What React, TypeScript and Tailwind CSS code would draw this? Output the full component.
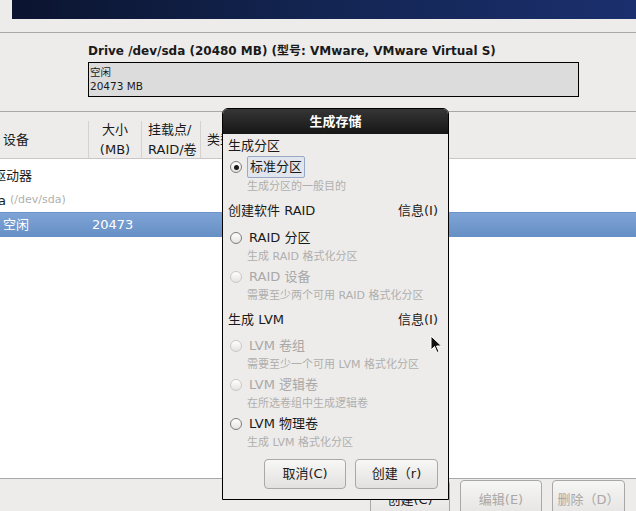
import React from "react";

const font = { fontFamily: '"DejaVu Sans", "Noto Sans CJK SC", sans-serif' };

function Radio({ checked = false, disabled = false }: { checked?: boolean; disabled?: boolean }) {
  return (
    <span
      className={`flex items-center justify-center w-[12px] h-[12px] rounded-full border bg-gradient-to-b from-white to-[#e4e3e1] ${
        disabled ? "border-[#c9c8c6]" : "border-[#7d7d7d]"
      }`}
    >
      {checked && <span className="w-[5px] h-[5px] rounded-full bg-[#1a1a1a]" />}
    </span>
  );
}

function Option({
  label,
  desc,
  checked,
  disabled,
  focus,
}: {
  label: string;
  desc: string;
  checked?: boolean;
  disabled?: boolean;
  focus?: boolean;
}) {
  return (
    <div>
      <div className={`flex items-center ${focus ? "h-[22px]" : "h-[20px]"}`}>
        <div className="w-[21px] pl-[2px] flex">
          <Radio checked={checked} disabled={disabled} />
        </div>
        {focus ? (
          <span className="h-[22px] flex items-center px-[2px] -ml-[2px] border border-[#9aaac4] bg-[#e1e6ee] rounded-[2px] text-[13px] text-[#1a1a1a]">
            {label}
          </span>
        ) : (
          <span className={`text-[13px] ${disabled ? "text-[#a9a8a6]" : "text-[#1a1a1a]"}`}>{label}</span>
        )}
      </div>
      <div className="h-[19px] flex items-center pl-[19px] text-[11px] text-[#b0afad]">{desc}</div>
    </div>
  );
}

function Section({ title, info }: { title: string; info?: boolean }) {
  return (
    <div className="h-[20px] flex items-center justify-between pr-[10px] text-[13px] text-[#1a1a1a]">
      <span>{title}</span>
      {info && <span>信息(I)</span>}
    </div>
  );
}

function BarButton({ label, className }: { label: string; className: string }) {
  return (
    <div
      className={`h-[40px] flex items-center justify-center rounded-[4px] border border-[#a9a8a6] bg-gradient-to-b from-[#f6f6f5] to-[#e3e2e0] text-[13px] ${className}`}
    >
      {label}
    </div>
  );
}

export default function App() {
  return (
    <div className="relative w-[636px] h-[511px] overflow-hidden bg-[#edeceb] text-[#1a1a1a]" style={font}>
      {/* banner */}
      <div className="ml-[12px] h-[19px] bg-gradient-to-r from-[#0b1430] via-[#132552] to-[#1b2f6e]" />
      <div className="h-[14px] border-b border-[#a9a8a6]" />

      {/* drive */}
      <div className="pl-[88px] pt-[10px]">
        <div className="h-[16px] flex items-center text-[12px] font-bold leading-none">
          Drive /dev/sda (20480 MB) (型号: VMware, VMware Virtual S)
        </div>
        <div className="mt-[3px] w-[491px] h-[35px] border border-black bg-[#dcdcdc] pl-[1px] pt-[2px] text-[10.5px] leading-[14px]">
          <div>空闲</div>
          <div>20473 MB</div>
        </div>
      </div>

      {/* table */}
      <div className="mt-[14px] border-t border-[#a9a8a6] bg-white h-[367px] flex flex-col">
        <div className="h-[47px] bg-[#edeceb] border-b border-[#c8c7c5] flex text-[13px]">
          <div className="w-[88px] flex items-center pl-[3px] pt-[9px]">设备</div>
          <div className="w-[53px] flex flex-col items-center justify-center leading-[20px] border-l border-[#d4d3d1] mt-[9px]">
            <span>大小</span>
            <span>(MB)</span>
          </div>
          <div className="w-[59px] flex flex-col justify-center pl-[6px] leading-[20px] border-l border-[#d4d3d1] mt-[9px]">
            <span>挂载点/</span>
            <span>RAID/卷</span>
          </div>
          <div className="flex items-center pl-[6px] border-l border-[#d4d3d1] mt-[9px]">类型</div>
        </div>
        <div className="h-[30px] flex items-center text-[13px] pt-[4px]">
          <span className="-ml-[7px]">驱动器</span>
        </div>
        <div className="h-[23px] flex items-center text-[13px] whitespace-nowrap">
          <span className="-ml-[17px]">sda</span>
          <span className="ml-[4px] text-[11px] text-[#b0afad]">(/dev/sda)</span>
        </div>
        <div className="h-[25px] flex items-center text-[13px] text-white bg-gradient-to-b from-[#7fa3d6] to-[#6590c5] border-t border-[#6d93c8]">
          <span className="w-[92px] pl-[3px]">空闲</span>
          <span>20473</span>
        </div>
      </div>

      {/* bottom bar */}
      <div className="border-t border-[#a9a8a6] h-[40px] flex pt-[1px] pl-[370px] gap-[10px]">
        <BarButton label="创建(C)" className="w-[80px] text-[#1a1a1a]" />
        <BarButton label="编辑(E)" className="w-[82px] text-[#a9a8a6]" />
        <BarButton label="删除（D）" className="w-[73px] text-[#a9a8a6]" />
      </div>

      {/* dialog */}
      <div className="absolute left-[222px] top-[108px] w-[227px] h-[392px] border border-black bg-[#edeceb] rounded-t-[6px] flex flex-col">
        <div className="h-[25px] rounded-t-[5px] bg-gradient-to-b from-[#363636] to-[#171717] flex items-center justify-center text-white text-[13px] font-bold">
          生成存储
        </div>
        <div className="pl-[5px] pt-[2px]">
          <Section title="生成分区" />
          <Option label="标准分区" desc="生成分区的一般目的" checked focus />
          <div className="mt-[4px] mb-[7px]">
            <Section title="创建软件 RAID" info />
          </div>
          <Option label="RAID 分区" desc="生成 RAID 格式化分区" />
          <Option label="RAID 设备" desc="需要至少两个可用 RAID 格式化分区" disabled />
          <div className="mt-[4px] mb-[6px]">
            <Section title="生成 LVM" info />
          </div>
          <Option label="LVM 卷组" desc="需要至少一个可用 LVM 格式化分区" disabled />
          <Option label="LVM 逻辑卷" desc="在所选卷组中生成逻辑卷" disabled />
          <Option label="LVM 物理卷" desc="生成 LVM 格式化分区" />
          <div className="flex justify-end gap-[9px] pr-[10px] mt-[6px]">
            <div className="w-[82px] h-[30px] flex items-center justify-center rounded-[4px] border border-[#a9a8a6] bg-gradient-to-b from-[#f7f7f6] to-[#e2e1df] text-[13px]">
              取消(C)
            </div>
            <div className="w-[83px] h-[30px] flex items-center justify-center rounded-[4px] border border-[#a9a8a6] bg-gradient-to-b from-[#f7f7f6] to-[#e2e1df] text-[13px]">
              创建（r)
            </div>
          </div>
        </div>
      </div>

      {/* mouse pointer */}
      <svg className="absolute left-[430px] top-[335px]" width="13" height="20" viewBox="0 0 13 20">
        <path d="M1 1 L1 15 L4.5 11.5 L7 17.5 L9 16.5 L6.5 11 L11.5 11 Z" fill="#111" stroke="#fff" strokeWidth="1" />
      </svg>
    </div>
  );
}
